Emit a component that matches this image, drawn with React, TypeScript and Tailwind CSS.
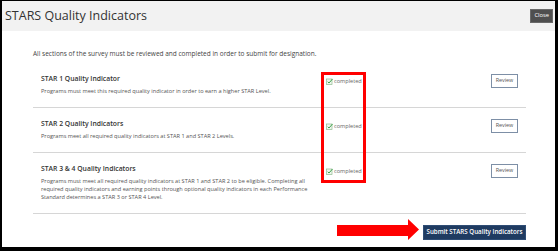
import React from 'react';

const rows = [
  {
    title: 'STAR 1 Quality Indicator',
    text: 'Programs must meet this required quality indicator in order to earn a higher STAR Level.',
  },
  {
    title: 'STAR 2 Quality Indicators',
    text: 'Programs meet all required quality indicators at STAR 1 and STAR 2 Levels.',
  },
  {
    title: 'STAR 3 & 4 Quality Indicators',
    text: 'Programs must meet all required quality indicators at STAR 1 and STAR 2 to be eligible. Completing all required quality indicators and earning points through optional quality indicators in each Performance Standard determines a STAR 3 or STAR 4 Level.',
  },
];

const CheckIcon = () => (
  <svg width="7" height="7" viewBox="0 0 14 14" className="shrink-0">
    <rect x="1" y="2" width="11" height="11" fill="#eef6ee" stroke="#8fb98f" strokeWidth="1.4" />
    <path d="M3.5 7.5 L6 10 L13 2" fill="none" stroke="#3fa34d" strokeWidth="2" />
  </svg>
);

const App: React.FC = () => {
  return (
    <div className="relative w-[558px] h-[251px] overflow-hidden bg-white border-black border-l-2 border-t border-r-[3px] border-b-[4px] font-['Open_Sans',sans-serif]">
      {/* Header */}
      <div className="h-[30px] bg-[#f2f2f2] flex items-center justify-between pl-[3px] pr-[2px]">
        <h1 className="text-[12.5px] leading-none text-[#333]">STARS Quality Indicators</h1>
        <button className="h-[14px] px-[3px] bg-[#4f4f4f] border border-[#6a6a6a] text-white text-[5.8px] leading-none">
          Close
        </button>
      </div>

      {/* Body */}
      <div className="pl-[31px] pr-[29px] pt-[19px]">
        <p className="text-[6.5px] leading-[8px] text-[#444]">
          All sections of the survey must be reviewed and completed in order to submit for designation.
        </p>

        <div className="mt-[5px]">
          {rows.map((row) => (
            <div key={row.title} className="flex items-start border-b border-[#d6d6d6] pl-[8px] pt-[11px] pb-[12px]">
              <div className="w-[275px]">
                <div className="text-[6.8px] leading-[10px] font-semibold text-[#333]">{row.title}</div>
                <p className="mt-[3px] text-[5.6px] leading-[8px] text-[#555]">{row.text}</p>
              </div>
              <div className="ml-[10px] mt-[3px] flex items-center gap-[1px]">
                <CheckIcon />
                <span className="text-[5.6px] leading-[8px] text-[#666]">completed</span>
              </div>
              <div className="flex-1 flex justify-end pr-[8px]">
                <button className="w-[27px] h-[14px] border border-[#7d8fa6] bg-white text-[5.4px] leading-none text-[#555]">
                  Review
                </button>
              </div>
            </div>
          ))}
        </div>

        {/* Footer */}
        <div className="flex items-end justify-end gap-[4px] pt-[5px]">
          <svg width="82" height="21" viewBox="0 0 82 21">
            <path d="M0 6 H71 V0 L82 10.5 L71 21 V17 H0 Z" fill="#ff0000" />
          </svg>
          <button className="w-[103px] h-[15px] bg-[#1f3b61] border border-[#2f4d75] text-white text-[6.2px] font-semibold leading-none">
            Submit STARS Quality Indicators
          </button>
        </div>
      </div>

      {/* Annotation box */}
      <div className="absolute left-[319px] top-[71px] w-[45px] h-[111px] border-[3px] border-[#ff0000]" />
    </div>
  );
};

export default App;
